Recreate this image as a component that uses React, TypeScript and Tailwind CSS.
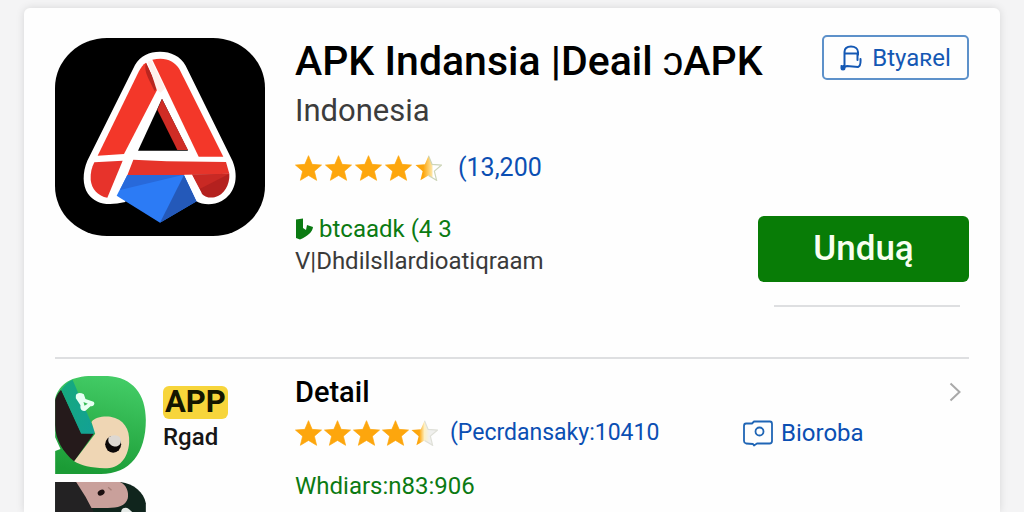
import React from "react";

const STAR = "M12 1l3.1 7.4 8 .6-6.1 5.200 1.900 7.800L12 17.800 5.100 22l1.900-7.800L.9 9l8-.6z";

function Star({ partial = false, pale = false }: { partial?: boolean; pale?: boolean }) {
  return (
    <svg viewBox="0.5 0.5 23 22" className="h-[26px] w-[27px] shrink-0" aria-hidden="true">
      {partial ? (
        <>
          <defs>
            <linearGradient id={pale ? "half-pale" : "half"}>
              <stop offset="0.3" stopColor="#fda60d" />
              <stop offset={pale ? "0.5" : "0.62"} stopColor={pale ? "#fdf0c4" : "#fde29a"} />
              <stop offset="0.68" stopColor={pale ? "#f0f0ee" : "#ffffff"} />
            </linearGradient>
          </defs>
          <path d={STAR} fill={pale ? "url(#half-pale)" : "url(#half)"} />
          <path
            d="M12 1l3.100 7.400 8 .6-6.100 5.200 1.900 7.800L12 17.800"
            fill="none"
            stroke={pale ? "#dfe0d8" : "#cdd5b8"}
            strokeWidth="1"
          />
        </>
      ) : (
        <path d={STAR} fill="#fda60d" stroke="#fda60d" strokeWidth="0.6" />
      )}
    </svg>
  );
}

function Rating({ pale = false }: { pale?: boolean }) {
  return (
    <div role="img" aria-label="4.5" className={pale ? "flex gap-[2px]" : "flex gap-[3px]"}>
      <Star />
      <Star />
      <Star />
      <Star />
      <Star partial pale={pale} />
    </div>
  );
}

function AppLogo() {
  return (
    <svg viewBox="45 52 630 594" className="h-[198px] w-[210px] shrink-0" aria-hidden="true">
      <rect x="45" y="52" width="630" height="594" rx="156" ry="150" fill="#000" />
      <path
        d="M285 133C302 105 327 93 360 93S421 106 437 135L578 422C598 473 584 520 545 541C518 555 489 553 468 541L420 462H268L256 544C200 557 166 549 144 519C127 494 127 456 142 420Z"
        fill="#fff"
      />
      <path d="M366 234L444 390H294Z" fill="#000" />
      <path d="M366 234L444 388H412L352 267Z" fill="#cf2c25" />
      <path d="M318 126L353 204L252 400L173 405L296 153C302 141 309 131 318 126Z" fill="#f33729" />
      <path d="M318 126L353 200L344 212C330 179 309 153 318 126Z" fill="#b9261f" />
      <path d="M337 117C374 108 402 119 418 145L550 408H476Z" fill="#f33729" />
      <path d="M323 123L334 119L375 203L362 216L350 207Z" fill="#fff0eb" />
      <path d="M163 425L248 420L202 531C174 526 155 506 152 477C151 457 155 440 163 425Z" fill="#e7332b" />
      <path d="M280 417L380 422L558 424L568 459L440 463L262 464Z" fill="#e6342a" />
      <path d="M456 462L568 459C570 493 552 522 524 530C507 533 492 528 483 516Z" fill="#b4211f" />
      <path d="M456 462L568 459L489 500L478 504Z" fill="#c92924" />
      <path d="M262 463H432L470 542L360 606L230 525Z" fill="#2c7bf5" />
      <path d="M262 463H428L240 508Z" fill="#2869da" />
      <path d="M432 463L470 542L360 606Z" fill="#2459b9" />
      <path d="M433 462H456L485 517L470 542Z" fill="#fff" />
    </svg>
  );
}

function GreenThumb() {
  return (
    <svg viewBox="45 78 272 294" className="h-[98px] w-[91px]" aria-hidden="true">
      <defs>
        <linearGradient id="leaf" x1="0.6" y1="0" x2="0.4" y2="1">
          <stop offset="0" stopColor="#43cc66" />
          <stop offset="1" stopColor="#1b9b35" />
        </linearGradient>
        <linearGradient id="teal" x1="0" y1="0" x2="1" y2="1">
          <stop offset="0" stopColor="#16aa7b" />
          <stop offset="1" stopColor="#12a096" />
        </linearGradient>
      </defs>
      <path
        d="M45 145C58 100 96 78 155 78H203C277 82 317 132 317 210C317 310 270 372 182 372H45V303L61 297L45 262Z"
        fill="url(#leaf)"
      />
      <path d="M63 119L123 249L162 250L102 334C70 308 45 270 45 225V150Q50 131 63 119Z" fill="#251a1b" />
      <path d="M63 119Q78 98 97 89L164 243L162 251H123Z" fill="url(#teal)" />
      <path
        d="M154 216C164 201 188 198 211 200C250 207 270 236 267 278C263 326 238 355 193 355C153 354 122 346 102 334L165 251Z"
        fill="#efd6b4"
      />
      <ellipse cx="219" cy="283" rx="24" ry="25" fill="#0c0808" />
      <path d="M206 262C217 253 236 254 241 266C246 282 234 292 220 289C207 285 201 274 206 262Z" fill="#ddd8d2" />
      <path
        d="M107 137C108 128 121 126 131 133L136 147L160 155C166 161 161 169 151 169L136 182C125 185 119 178 121 166L107 145ZM130 156L133 167L143 161Z"
        fill="#e7fff3"
        fillRule="evenodd"
      />
    </svg>
  );
}

function DarkThumb() {
  return (
    <svg viewBox="45 396 272 90" className="h-[30px] w-[91px]" aria-hidden="true">
      <path d="M45 396H241C281 401 311 427 317 460V486H45Z" fill="#10251d" />
      <path d="M45 396H110L156 473L160 486H45Z" fill="#232223" />
      <path d="M108 396H240C258 404 267 425 263 445C257 468 232 474 203 474H154L136 440Z" fill="#c9a09b" />
      <ellipse cx="183" cy="428" rx="11" ry="8" fill="#1b0f10" transform="rotate(-30 183 428)" />
      <path d="M204 412l10 9" stroke="#a77f78" strokeWidth="4" />
      <path d="M243 486C243 473 258 470 266 477L276 486Z" fill="#e6ebe8" />
    </svg>
  );
}

export default function App() {
  return (
    <div className="min-h-screen bg-[#f4f4f5] px-6 pt-2 font-[Roboto,sans-serif] text-black">
      <main className="rounded-t-md bg-[#fefefe] px-[31px] pt-[27px] shadow-[0_0_8px_rgba(0,0,0,0.12)]">
        <section className="flex h-[324px] border-b-2 border-[#dedfe1]">
          <div className="pt-[3px]">
            <AppLogo />
          </div>
          <div className="ml-[30px] min-w-0 flex-1">
            <h1 className="text-[41px] leading-[52px] font-medium whitespace-nowrap">
              APK Indansia |Deail ɔAPK
            </h1>
            <p className="text-[31px] leading-[48px] text-[#3c3c3c]">Indonesia</p>
            <div className="mt-[15px] flex items-center gap-[16px]">
              <Rating />
              <a href="#reviews" className="text-[25px] leading-[36px] text-[#0b4fb3]">
                (13,200
              </a>
            </div>
            <p className="mt-[27px] flex items-center gap-[6px] text-[24px] leading-[32px] text-[#0b7a12]">
              <svg viewBox="0 0 18 22" className="h-[22px] w-[18px]" aria-hidden="true">
                <path d="M1 1.500L8 0.500V10L11 12L12 7L18 9C17.500 14 13 18 5 21.500L1 20Z" fill="currentColor" />
              </svg>
              btcaadk (4 3
            </p>
            <p className="text-[24px] leading-[32px] whitespace-nowrap text-[#3a3a3a]">
              V|Dhdilsllardioatiqraam
            </p>
          </div>
          <div className="flex w-[211px] shrink-0 flex-col items-end">
            <button
              type="button"
              className="flex h-[45px] w-[147px] items-center justify-center gap-[10px] rounded-[5px] border-2 border-[#5d91ca] text-[24px] text-[#1458b4]"
            >
              <svg
                viewBox="0 0 22 26"
                className="h-[26px] w-[22px]"
                fill="none"
                stroke="currentColor"
                strokeWidth="2"
                strokeLinecap="round"
                aria-hidden="true"
              >
                <path d="M4.500 20V7C4.500 3 7 1.500 11 1.500S18 3.500 18 7V10M5 8.500H17.500V15M4.500 20L2 23L1.500 21M3 22.500L7 21L18 22Q21 21 20.500 14" />
                <circle cx="3" cy="23" r="1.500" fill="currentColor" />
              </svg>
              Btyaʀel
            </button>
            <button
              type="button"
              className="mt-[136px] h-[66px] w-full rounded-md bg-[#087c06] text-[35px] font-medium text-[#f8fff0]"
            >
              Unduą
            </button>
            <div className="mt-[23px] mr-[9px] h-[2px] w-[186px] bg-[#dedfe1]" />
          </div>
        </section>

        <section className="flex pt-[17px]">
          <div className="flex w-[91px] shrink-0 flex-col gap-2">
            <GreenThumb />
            <DarkThumb />
          </div>
          <div className="ml-[17px] w-[132px] shrink-0 pt-[10px]">
            <span className="inline-block h-[33px] rounded-md bg-[#f7d53b] px-[2px] text-[31px] leading-[32px] font-bold text-[#141600]">
              APP
            </span>
            <p className="text-[24px] leading-[36px] font-medium text-[#161616]">Rgad</p>
          </div>
          <div className="min-w-0 flex-1">
            <div className="flex items-center justify-between pr-[8px]">
              <h2 className="text-[29px] leading-[32px] font-medium">Detail</h2>
              <svg
                viewBox="0 0 12 20"
                className="h-[20px] w-[12px]"
                fill="none"
                stroke="#a9a9a9"
                strokeWidth="2"
                aria-hidden="true"
              >
                <path d="M1.500 1.500L10.500 10L1.500 18.500" />
              </svg>
            </div>
            <div className="mt-[8px] flex items-center">
              <Rating pale />
              <a href="#reviews" className="ml-[12px] w-[293px] text-[23px] leading-[34px] whitespace-nowrap text-[#0b4fb3]">
                (Pecrdansaky:10410
              </a>
              <a href="#more" className="flex items-center gap-[8px] text-[24px] leading-[34px] text-[#0b4fb3]">
                <svg
                  viewBox="0 0 30 27"
                  className="h-[27px] w-[30px]"
                  fill="none"
                  stroke="#1f65b5"
                  strokeWidth="1.800"
                  strokeLinejoin="round"
                  aria-hidden="true"
                >
                  <path d="M3 3.500H9L11 1.500H27Q29 1.500 29 4V21Q29 23.500 26.500 23.500H14L11 25.500L10 24L3 23.500Q1 23 1 21V6Q1 3.500 3 3.500Z" />
                  <circle cx="16.500" cy="11.500" r="4" />
                </svg>
                Bioroba
              </a>
            </div>
            <p className="mt-[19px] text-[24px] leading-[34px] text-[#0b7a12]">Whdiars:n83:906</p>
          </div>
        </section>
      </main>
    </div>
  );
}
